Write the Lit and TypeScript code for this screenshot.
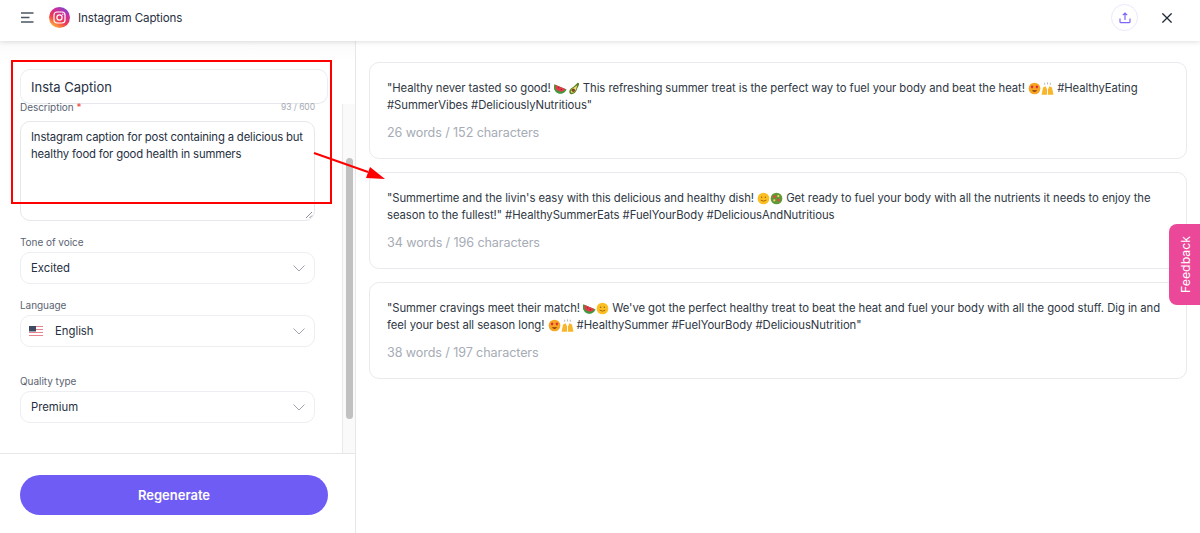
import { LitElement, html, css, svg } from "lit";
import { customElement } from "lit/decorators.js";

const melon = svg`<path d="M.3 2.5 A7.2 7.2 0 0 0 13.6 8.2 Z" fill="#3f9a3c"/><path d="M1.7 3.1 A5.8 5.8 0 0 0 12.2 7.6 Z" fill="#e8384a"/><circle cx="5" cy="6.2" r=".55" fill="#4a1a1a"/><circle cx="7.8" cy="8" r=".55" fill="#4a1a1a"/>`;
const avocado = svg`<path d="M3.5 13 Q0 9 7 5 L11.5 .8 Q13.4 .6 13 3 L11 7 Q9 14 3.5 13Z" fill="#5e7f22"/><path d="M4.6 11.6 Q2.6 9 7.6 6 L11 3.4 L10 7 Q8.2 12.4 4.6 11.6Z" fill="#e9e07a"/><circle cx="6.8" cy="8.8" r="1.9" fill="#7a4a1e"/>`;
const yum = svg`<circle cx="7" cy="7" r="6.3" fill="#fbbf24"/><path d="M4 8.8 Q7 10.8 10 8.8" stroke="#a16207" stroke-width="1" fill="none"/><circle cx="5" cy="5.6" r=".8" fill="#a16207"/><circle cx="9" cy="5.6" r=".8" fill="#a16207"/>`;
const salad = svg`<circle cx="7" cy="7" r="6.3" fill="#5f9a35"/><circle cx="5" cy="5" r="1.6" fill="#dc4b3e"/><circle cx="9" cy="8.5" r="1.6" fill="#dc4b3e"/><circle cx="9" cy="4.4" r="1.2" fill="#f3d36b"/><circle cx="4.6" cy="9" r="1.2" fill="#f3d36b"/>`;
const love = svg`<circle cx="7" cy="7" r="6.3" fill="#f6a623"/><path d="M2.8 5 l1.6 -1.4 l1.6 1.4 l-1.6 2.2z M8 5 l1.6 -1.4 l1.6 1.4 l-1.6 2.2z" fill="#e0263c"/><path d="M4 9 Q7 12.4 10 9Z" fill="#8a3b12"/>`;
const hands = svg`<path d="M.6 13.6 L2.2 6 L5 4.6 L6.5 8 L6.5 13.6Z M13.4 13.6 L11.8 6 L9 4.6 L7.5 8 L7.5 13.6Z" fill="#f8b62d"/><path d="M4 3 V.8 M7 2.6 V.4 M10 3 V.8" stroke="#8c9199" stroke-width=".7"/>`;
const emoji = (p: unknown) => html`<svg class="emoji" viewBox="0 0 14 14">${p}</svg>`;

const chevron = html`<svg class="chev" width="12" height="7" viewBox="0 0 12 7" fill="none"><path d="M.5.5L6 6l5.5-5.5" stroke="#9ca3af" stroke-width="1"/></svg>`;

@customElement("app-root")
export class AppRoot extends LitElement {
  static styles = css`
    :host { display: block; width: 1200px; height: 533px; position: relative; overflow: hidden; background: #fff; font-family: Inter, "Liberation Sans", sans-serif; color: #1f2937; }
    * { box-sizing: border-box; }
    header { height: 41px; display: flex; align-items: center; padding: 0 28px 6px 21px; background: #fff; box-shadow: 0 1px 5px rgba(0,0,0,.13); position: relative; z-index: 1; }
    .title { font-size: 11.6px; margin-left: 8px; color: #27303f; letter-spacing: -.12px; }
    .logo { margin-left: 15px; }
    .spacer { flex: 1; }
    .share { width: 27px; height: 27px; border-radius: 50%; border: 1px solid #ebe8fc; display: flex; align-items: center; justify-content: center; margin-right: 24px; }
    main { display: flex; height: 492px; }
    .left { width: 356px; border-right: 1px solid #e5e7eb; display: flex; flex-direction: column; }
    .upper { flex: 1; min-height: 0; display: flex; flex-direction: column; padding-top: 28px; background: linear-gradient(#fafafa, #fff 20px); }
    .caption { margin-left: 20px; width: 308px; height: 35px; border: 1px solid #eceef1; border-bottom-color: #e5e7eb; border-radius: 10px; padding: 0 10px; display: flex; align-items: center; font-size: 13px; background: #fff; color: #27303f; flex: none; }
    .scroll { flex: 1; min-height: 0; display: flex; }
    .form { width: 342px; padding-left: 20px; }
    .track { width: 13px; background: #fafafa; border-left: 1px solid #e9eaec; padding: 54px 3px 0 3px; }
    .thumb { width: 7px; height: 261px; background: #c1c1c1; border-radius: 4px; }
    .label { font-size: 10px; color: #5b6472; display: flex; justify-content: space-between; align-items: center; height: 16px; width: 295px; letter-spacing: -.05px; }
    .label.d { margin-top: -5px; position: relative; }
    .req { color: #ef4444; margin-left: 3px; }
    .count { color: #a6acb5; font-size: 8.5px; }
    .area { width: 295px; height: 100px; border: 1px solid #e5e7eb; border-radius: 10px; padding: 7px 6px 6px 10px; margin-top: 6px; font-size: 11.3px; line-height: 17px; position: relative; color: #27303f; letter-spacing: -.16px; }
    .grip { position: absolute; right: 1px; bottom: 1px; }
    .select { width: 295px; height: 32px; border: 1px solid #eceef1; border-radius: 10px; padding: 0 9px 0 10px; display: flex; align-items: center; justify-content: space-between; font-size: 11.3px; color: #27303f; margin-top: 2px; }
    .lang { display: flex; align-items: center; gap: 12px; margin-left: -2px; }
    .f1, .f2 { margin-top: 13px; }
    .f3 { margin-top: 26px; }
    .foot { height: 80px; flex: none; border-top: 1px solid #e5e7eb; padding: 21px 0 0 20px; }
    .btn { width: 308px; height: 40px; border-radius: 20px; background: #6f5cf5; color: #fff; font-size: 13px; font-weight: 600; display: flex; align-items: center; justify-content: center; }
    .right { flex: 1; padding: 21px 13px 0; display: flex; flex-direction: column; gap: 13px; }
    .card { border: 1px solid #e8eaee; border-radius: 10px; padding: 17px 17px 0; height: 97px; font-size: 11.3px; line-height: 17px; color: #2f3744; letter-spacing: -.06px; }
    .meta { font-size: 12.6px; color: #a6acb5; margin-top: 11px; line-height: 16px; letter-spacing: -.1px; }
    .emoji { width: 13px; height: 13px; vertical-align: -2.5px; }
    .feedback { position: absolute; right: 0; top: 224px; width: 31px; height: 81px; background: #ec4899; border-radius: 8px 0 0 8px; color: #fff; font-size: 12.3px; display: flex; align-items: center; justify-content: center; padding-left: 2px; }
    .feedback span { transform: rotate(-90deg); white-space: nowrap; }
    .redbox { position: absolute; left: 11px; top: 60px; width: 321px; height: 144px; border: 2px solid #f00; z-index: 2; }
    .arrow { position: absolute; left: 0; top: 0; z-index: 2; pointer-events: none; }
  `;

  render() {
    return html`
      <header>
        <svg width="13" height="11" viewBox="0 0 13 11" fill="none" stroke="#4b5563" stroke-width="1.3"><path d="M0 1h12.5M0 5.5h8.5M0 10h12.5"/></svg>
        <svg class="logo" width="21" height="21" viewBox="0 0 21 21">
          <defs><linearGradient id="ig" x1="0.2" y1="1" x2="0.8" y2="0"><stop offset="0" stop-color="#fdc33a"/><stop offset=".4" stop-color="#f0384f"/><stop offset=".75" stop-color="#c42fa5"/><stop offset="1" stop-color="#6a4fd6"/></linearGradient></defs>
          <circle cx="10.5" cy="10.5" r="10.5" fill="url(#ig)"/>
          <rect x="5" y="5" width="11" height="11" rx="3" fill="none" stroke="#fff" stroke-width="1.2"/>
          <circle cx="10.5" cy="10.5" r="2.6" fill="none" stroke="#fff" stroke-width="1.2"/>
          <circle cx="13.8" cy="7.2" r=".7" fill="#fff"/>
        </svg>
        <span class="title">Instagram Captions</span>
        <span class="spacer"></span>
        <div class="share">
          <svg width="12" height="12" viewBox="0 0 12 12" fill="none" stroke="#7c66f5" stroke-width="1.2"><path d="M1 6.5v3.2q0 1 1 1h8q1 0 1-1V6.5M6 8V1M3.8 3.2L6 1l2.2 2.2"/></svg>
        </div>
        <svg width="10" height="10" viewBox="0 0 10 10" fill="none" stroke="#1f2937" stroke-width="1.3"><path d="M.4.4l9.2 9.2M9.6.4L.4 9.6"/></svg>
      </header>
      <main>
        <section class="left">
          <div class="upper">
            <div class="caption">Insta Caption</div>
            <div class="scroll">
              <div class="form">
                <div class="label d"><span>Description<span class="req">*</span></span><span class="count">93 / 600</span></div>
                <div class="area">Instagram caption for post containing a delicious but healthy food for good health in summers
                  <svg class="grip" width="8" height="8" viewBox="0 0 8 8" stroke="#6b7280" stroke-width=".8"><path d="M1 7l6-6M4.5 7L7 4.5"/></svg>
                </div>
                <div class="label f1">Tone of voice</div>
                <div class="select">Excited ${chevron}</div>
                <div class="label f2">Language</div>
                <div class="select">
                  <span class="lang">
                    <svg width="14" height="11" viewBox="0 0 14 11"><rect width="14" height="11" fill="#fff"/><path d="M0 .5h14M0 3.5h14M0 6.5h14M0 9.5h14" stroke="#e9838f" stroke-width="1.2"/><rect width="7" height="5.5" fill="#3f4a63"/></svg>
                    English
                  </span>
                  ${chevron}
                </div>
                <div class="label f3">Quality type</div>
                <div class="select">Premium ${chevron}</div>
              </div>
              <div class="track"><div class="thumb"></div></div>
            </div>
          </div>
          <div class="foot"><div class="btn">Regenerate</div></div>
        </section>
        <section class="right">
          <div class="card">"Healthy never tasted so good! ${emoji(melon)}${emoji(avocado)} This refreshing summer treat is the perfect way to fuel your body and beat the heat! ${emoji(love)}${emoji(hands)} #HealthyEating #SummerVibes #DeliciouslyNutritious"
            <div class="meta">26 words / 152 characters</div></div>
          <div class="card">"Summertime and the livin's easy with this delicious and healthy dish! ${emoji(yum)}${emoji(salad)} Get ready to fuel your body with all the nutrients it needs to enjoy the season to the fullest!" #HealthySummerEats #FuelYourBody #DeliciousAndNutritious
            <div class="meta">34 words / 196 characters</div></div>
          <div class="card">"Summer cravings meet their match! ${emoji(melon)}${emoji(yum)} We've got the perfect healthy treat to beat the heat and fuel your body with all the good stuff. Dig in and feel your best all season long! ${emoji(love)}${emoji(hands)} #HealthySummer #FuelYourBody #DeliciousNutrition"
            <div class="meta">38 words / 197 characters</div></div>
        </section>
      </main>
      <div class="feedback"><span>Feedback</span></div>
      <div class="redbox"></div>
      <svg class="arrow" width="400" height="200" viewBox="0 0 400 200"><path d="M314 153L368 172" stroke="#f00" stroke-width="2"/><path d="M385 179L366 178L370 167Z" fill="#f00"/></svg>
    `;
  }
}
